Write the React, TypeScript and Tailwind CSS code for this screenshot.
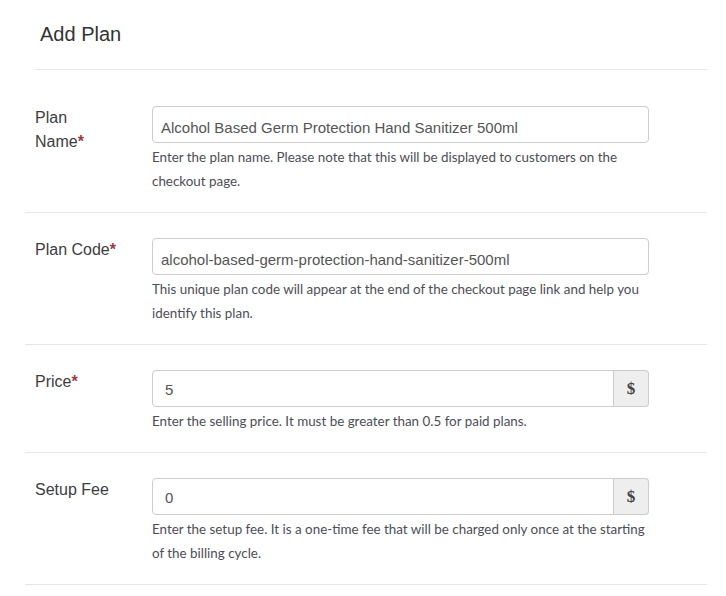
import React from "react";

const sans = { fontFamily: '"Liberation Sans", Arial, sans-serif' };

interface RowProps {
  label: React.ReactNode;
  value: string;
  help: string;
  addon?: boolean;
  first?: boolean;
  inputPad?: string;
}

function Row({ label, value, help, addon, first, inputPad = "pl-[8px] pt-[7px]" }: RowProps) {
  return (
    <div
      className={`flex border-b border-[#e6e6e6] pb-[19px] pl-[10px] ${
        first ? "pt-[36px]" : "pt-[25px]"
      }`}
    >
      <div
        className="w-[117px] shrink-0 text-[16px] leading-[24px] text-[#3d3d3d]"
        style={sans}
      >
        {label}
      </div>
      <div className="w-[497px]">
        <div className="flex h-[37px]">
          <div
            className={`flex flex-1 items-center border border-[#ccc] bg-white text-[15px] text-[#555] ${inputPad} ${
              addon ? "rounded-l-[4px]" : "rounded-[4px]"
            }`}
            style={sans}
          >
            {value}
          </div>
          {addon && (
            <div
              className="flex w-[35px] items-center justify-center rounded-r-[4px] border border-l-0 border-[#ccc] bg-[#eeeeee] text-[17px] font-bold text-[#444]"
              style={{ fontFamily: '"Liberation Serif", "Times New Roman", serif' }}
            >
              $
            </div>
          )}
        </div>
        <p
          className="mt-[2px] text-[13.4px] leading-[24px] text-[#4d4d55]"
          style={{ fontFamily: "Lato, sans-serif" }}
        >
          {help}
        </p>
      </div>
    </div>
  );
}

const Req = () => <span className="font-bold text-[#a03a3a]">*</span>;

export default function App() {
  return (
    <div className="min-h-[596px] w-[726px] bg-white">
      <div className="pl-[25px] pr-[19px]">
        {/* Header */}
        <div className="ml-[10px] border-b border-[#e6e6e6] pb-[21px] pl-[5px] pt-[20px]">
          <h1 className="text-[20px] leading-[28px] text-[#333]" style={sans}>
            Add Plan
          </h1>
        </div>

        <Row
          first
          label={
            <>
              Plan
              <br />
              Name<Req />
            </>
          }
          value="Alcohol Based Germ Protection Hand Sanitizer 500ml"
          help="Enter the plan name. Please note that this will be displayed to customers on the checkout page."
        />
        <Row
          label={
            <>
              Plan Code<Req />
            </>
          }
          value="alcohol-based-germ-protection-hand-sanitizer-500ml"
          help="This unique plan code will appear at the end of the checkout page link and help you identify this plan."
        />
        <Row
          label={
            <>
              Price<Req />
            </>
          }
          value="5"
          addon
          inputPad="pl-[12px] pt-[3px]"
          help="Enter the selling price. It must be greater than 0.5 for paid plans."
        />
        <Row
          label="Setup Fee"
          value="0"
          addon
          inputPad="pl-[12px] pt-[3px]"
          help="Enter the setup fee. It is a one-time fee that will be charged only once at the starting of the billing cycle."
        />
      </div>
    </div>
  );
}
